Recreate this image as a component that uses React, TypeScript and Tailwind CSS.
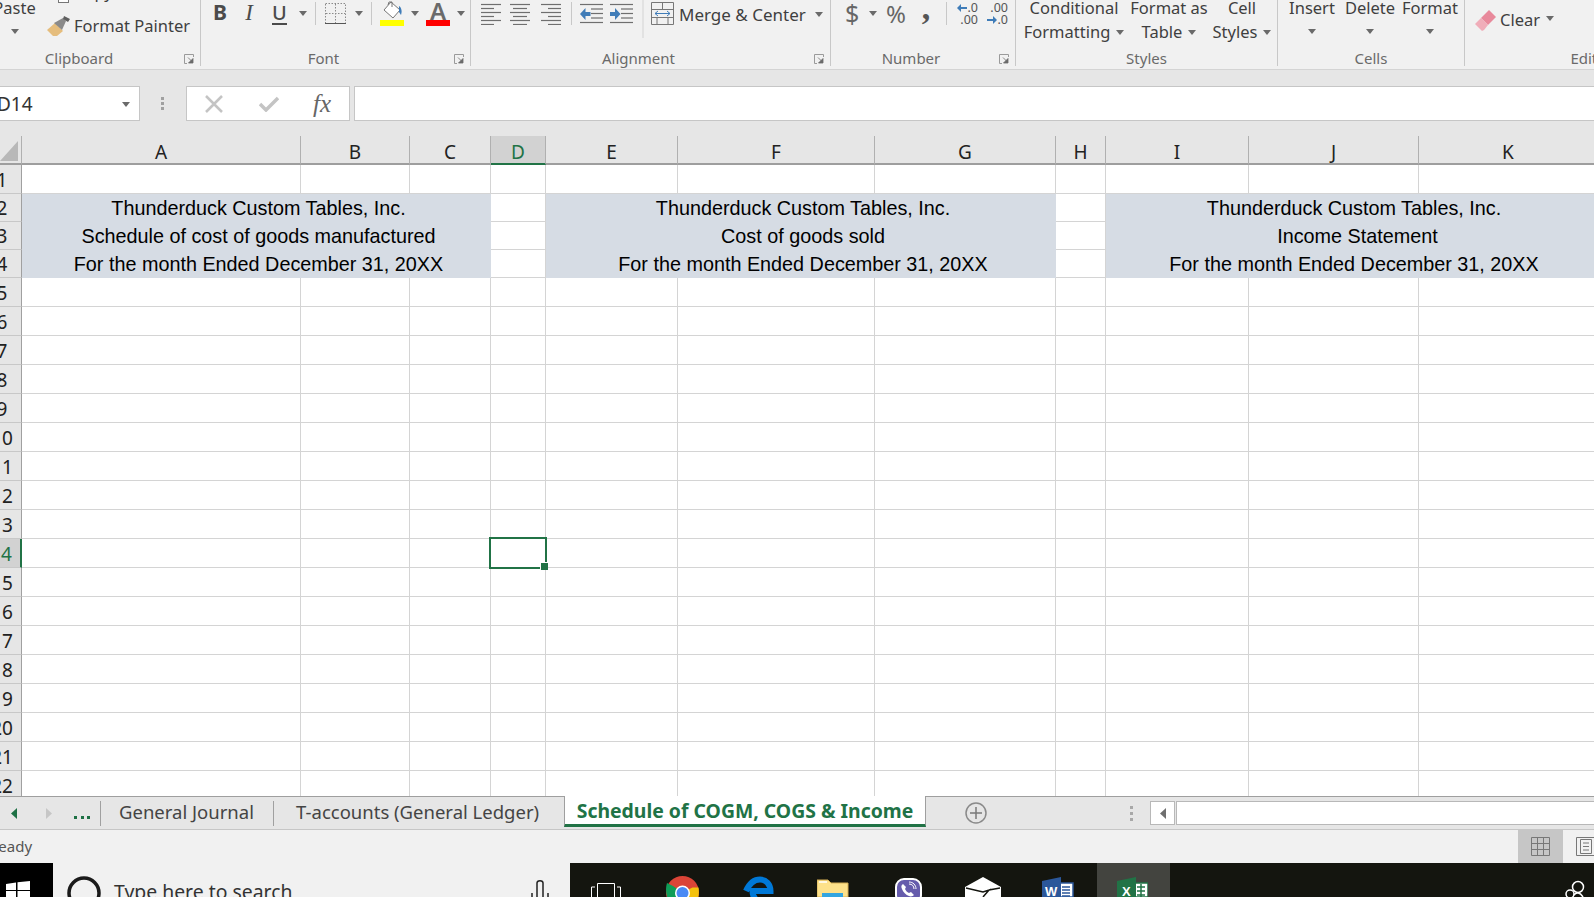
import { Fragment, type ReactNode } from "react";

const columns = ["A", "B", "C", "D", "E", "F", "G", "H", "I", "J", "K"];
const rows = Array.from({ length: 22 }, (_, i) => i + 1);

const titles: Record<number, string[]> = {
  2: [
    "Thunderduck Custom Tables, Inc.",
    "Thunderduck Custom Tables, Inc.",
    "Thunderduck Custom Tables, Inc.",
  ],
  3: [
    "Schedule of cost of goods manufactured",
    "Cost of goods sold",
    "Income Statement",
  ],
  4: [
    "For the month Ended December 31, 20XX",
    "For the month Ended December 31, 20XX",
    "For the month Ended December 31, 20XX",
  ],
};

const Caret = ({ className = "" }: { className?: string }) => (
  <svg width="8" height="5" viewBox="0 0 8 5" className={`shrink-0 ${className}`}>
    <path d="M0 0h8L4 5z" fill="#6a6a6a" />
  </svg>
);

const Launcher = () => (
  <svg width="10" height="10" viewBox="0 0 10 10" className="ml-[8px]">
    <path d="M9.5 3V.5H.5v9H3" fill="none" stroke="#9a9a9a" />
    <path d="M4 3.5l4 4M9 4.5V9H4.5z" stroke="#6a6a6a" fill="#6a6a6a" strokeWidth="0.8" />
  </svg>
);

const Sep = () => <div className="h-[23px] w-px shrink-0 bg-[#c8c8c8]" />;

const Group = ({
  label,
  launcher,
  className,
  children,
}: {
  label: string;
  launcher?: boolean;
  className: string;
  children: ReactNode;
}) => (
  <div className={`h-[66px] shrink-0 border-r border-[#c8c8c8] ${className}`}>
    <div className="flex h-[49px] flex-col">{children}</div>
    <div className="flex h-[19px] items-center">
      <span className="flex-1 text-center text-[15px] text-[#6a6a6a]">{label}</span>
      {launcher && (
        <div className="w-[24px]">
          <Launcher />
        </div>
      )}
    </div>
  </div>
);

const AlignIcon = ({ lines }: { lines: number[][] }) => (
  <svg width="20" height="22" viewBox="0 0 20 22" className="shrink-0">
    {lines.map(([a, b], i) => (
      <path key={i} d={`M${a} ${i * 4 + 1.5}H${b}`} stroke="#6f6f6f" strokeWidth="1.2" />
    ))}
  </svg>
);

const IndentIcon = ({ flip }: { flip?: boolean }) => (
  <svg width="23" height="22" viewBox="0 0 23 22" className="shrink-0">
    {[1.5, 6, 10.5, 15, 19.5].map((y, i) => (
      <path key={y} d={`M${i === 0 || i === 4 ? 0 : 11} ${y}H23`} stroke="#6f6f6f" strokeWidth="1.2" />
    ))}
    {flip ? (
      <path d="M0 9h5V5l5.500 6-5.500 6v-4H0z" fill="#3f7cb8" />
    ) : (
      <path d="M10 9H5V5l-5.500 6 5.500 6v-4h5z" fill="#3f7cb8" transform="translate(0.500 0)" />
    )}
  </svg>
);

const DecIcon = ({ up }: { up?: boolean }) => (
  <div className="flex w-[22px] shrink-0 flex-col items-end text-[12.500px] leading-[12px] text-[#555555]">
    <div className="flex items-center">
      {up ? (
        <svg width="10" height="8" viewBox="0 0 10 8">
          <path d="M10 3H4V0L0 4l4 4V5h6z" fill="#3f7cb8" />
        </svg>
      ) : null}
      <span>{up ? ".0" : ".00"}</span>
    </div>
    <div className="flex items-center">
      {up ? null : (
        <svg width="10" height="8" viewBox="0 0 10 8">
          <path d="M0 3h6V0l4 4-4 4V5H0z" fill="#3f7cb8" />
        </svg>
      )}
      <span>{up ? ".00" : ".0"}</span>
    </div>
  </div>
);

const Ribbon = () => (
  <div className="flex h-[70px] overflow-hidden border-b border-[#d4d4d4] bg-[#f1f1f1] text-[16.500px] text-[#3f3f3f]">
    <Group label="Clipboard" launcher className="-ml-[18px] w-[219px]">
      <div className="flex">
        <div className="-mt-[4px] ml-[12px] flex w-[41px] flex-col items-center">
          <span className="h-[24px] leading-[24px]">Paste</span>
          <Caret className="mt-[9px]" />
        </div>
        <div className="-mt-[28px] ml-[12px] flex flex-col">
          <div className="flex h-[40px] items-center">
            <div className="w-[27px] pl-[11px]">
              <div className="mt-[12px] h-[10px] w-[11px] border border-[#777777] bg-white" />
            </div>
            <span>Copy</span>
          </div>
          <div className="flex h-[29px] items-center">
            <svg width="23" height="21" viewBox="0 0 23 21" className="mr-[4px]">
              <path d="M0 14l8-7 8 8-6 5H6z" fill="#e5bd7d" />
              <path d="M7 7l9-5 3 3-4 9z" fill="#8a8a8a" />
              <path d="M17 0l6 3-2 3-5-3z" fill="#5f5f5f" />
            </svg>
            <span className="whitespace-nowrap">Format Painter</span>
          </div>
        </div>
      </div>
    </Group>

    <Group label="Font" launcher className="w-[270px]">
      <div className="flex h-[26px] items-center text-[#4b4b4b]">
        <span className="ml-[12px] w-[12px] text-center text-[21px] font-bold">B</span>
        <span className="ml-[18px] w-[12px] text-center font-['Liberation_Serif',serif] text-[23px] italic">I</span>
        <span className="ml-[17px] w-[15px] border-b-2 border-[#4b4b4b] text-center text-[20px] leading-[21px] font-medium">U</span>
        <Caret className="ml-[12px]" />
        <div className="ml-[8px]">
          <Sep />
        </div>
        <svg width="21" height="21" viewBox="0 0 21 21" className="ml-[9px] shrink-0">
          <path d="M.5.500h20v20H.5z" fill="none" stroke="#8a8a8a" strokeDasharray="1.500 1.500" />
          <path d="M10.500 1v19M1 10.500h19" stroke="#8a8a8a" strokeDasharray="1.500 1.500" />
          <path d="M0 20.500h21" stroke="#555555" />
        </svg>
        <Caret className="ml-[9px]" />
        <div className="ml-[8px]">
          <Sep />
        </div>
        <div className="ml-[8px] flex w-[24px] shrink-0 flex-col">
          <svg width="24" height="19" viewBox="0 0 24 19">
            <path d="M11 1l9 8-7 8-9-8z" fill="#ffffff" stroke="#777777" />
            <path d="M8 4l1-3h3v5" fill="none" stroke="#777777" />
            <path d="M19 5c3 2 3 6 2 9l-2-3c0-2 0-4 0-6z" fill="#3f7cb8" />
          </svg>
          <div className="h-[6px] bg-[#ffff00]" />
        </div>
        <Caret className="ml-[7px]" />
        <div className="ml-[7px] flex w-[24px] shrink-0 flex-col items-center">
          <span className="h-[19px] text-[24px] leading-[19px] font-semibold text-[#6a6a6a]">A</span>
          <div className="h-[6px] w-full bg-[#ff0000]" />
        </div>
        <Caret className="ml-[7px]" />
      </div>
    </Group>

    <Group label="Alignment" launcher className="w-[360px]">
      <div className="flex h-[27px] items-center">
        <div className="ml-[10px]">
          <AlignIcon lines={[[0, 20], [0, 13], [0, 20], [0, 13], [0, 20], [0, 13]]} />
        </div>
        <div className="ml-[9px]">
          <AlignIcon lines={[[0, 20], [3, 17], [0, 20], [3, 17], [0, 20], [3, 17]]} />
        </div>
        <div className="ml-[11px]">
          <AlignIcon lines={[[0, 20], [7, 20], [0, 20], [7, 20], [0, 20], [7, 20]]} />
        </div>
        <div className="ml-[10px]">
          <Sep />
        </div>
        <div className="ml-[8px]">
          <IndentIcon />
        </div>
        <div className="ml-[7px]">
          <IndentIcon flip />
        </div>
        <div className="ml-[9px] h-[38px] w-[2px] shrink-0 self-start bg-[#e2e2e2]" />
        <svg width="23" height="23" viewBox="0 0 23 23" className="ml-[7px] shrink-0">
          <path d="M.5.500h22v22H.5zM.5 7.500h22M.5 15.500h22M11.500 1v6M6 16v6M17 16v6" fill="none" stroke="#777777" />
          <rect x="1" y="8" width="21" height="7" fill="#f1f1f1" />
          <path d="M4 11.500h15M4 11.500l3-2.500M4 11.500l3 2.500M19 11.500l-3-2.500M19 11.500l-3 2.500" stroke="#3f7cb8" fill="none" />
        </svg>
        <span className="mt-[2px] ml-[5px] w-[125px] text-[17px] whitespace-nowrap">Merge &amp; Center</span>
        <Caret className="mt-[2px] ml-[11px]" />
      </div>
    </Group>

    <Group label="Number" launcher className="w-[185px]">
      <div className="flex h-[27px] items-center text-[#666666]">
        <span className="ml-[14px] w-[12px] text-center text-[25px] leading-[27px]">$</span>
        <Caret className="ml-[12px]" />
        <span className="ml-[9px] w-[20px] text-center text-[24px] leading-[27px]">%</span>
        <span className="-mt-[12px] ml-[15px] w-[10px] text-center font-['Liberation_Serif',serif] text-[34px] leading-[20px] font-bold text-[#555555]">,</span>
        <div className="ml-[15px]">
          <Sep />
        </div>
        <div className="ml-[9px]">
          <DecIcon up />
        </div>
        <div className="ml-[8px]">
          <DecIcon />
        </div>
      </div>
    </Group>

    <Group label="Styles" className="w-[262px]">
      <div className="-mt-[4px] flex leading-[24px]">
        <div className="ml-[6px] w-[104px] text-center">
          <div>Conditional</div>
          <div className="flex items-center justify-center">
            Formatting
            <Caret className="ml-[6px]" />
          </div>
        </div>
        <div className="ml-[2px] w-[82px] text-center">
          <div className="whitespace-nowrap">Format as</div>
          <div className="flex items-center justify-center">
            Table
            <Caret className="ml-[6px]" />
          </div>
        </div>
        <div className="ml-[2px] w-[60px] text-center">
          <div>Cell</div>
          <div className="flex items-center justify-center">
            Styles
            <Caret className="ml-[6px]" />
          </div>
        </div>
      </div>
    </Group>

    <Group label="Cells" className="w-[187px]">
      <div className="-mt-[4px] flex leading-[24px]">
        <div className="ml-[8px] flex w-[52px] flex-col items-center">
          Insert
          <Caret className="mt-[9px]" />
        </div>
        <div className="ml-[4px] flex w-[56px] flex-col items-center">
          Delete
          <Caret className="mt-[9px]" />
        </div>
        <div className="ml-[2px] flex w-[60px] flex-col items-center">
          Format
          <Caret className="mt-[9px]" />
        </div>
      </div>
    </Group>

    <Group label="Editing" className="w-[260px] border-r-0">
      <div className="flex h-[40px] items-center">
        <svg width="21" height="21" viewBox="0 0 21 21" className="ml-[10px] shrink-0">
          <path d="M14 0l7 7-8 8-7-7z" fill="#e8899b" />
          <path d="M6 8l7 7-4 5-2 1-7-7z" fill="#f0adb9" />
        </svg>
        <span className="ml-[4px]">Clear</span>
        <Caret className="-mt-[4px] ml-[6px]" />
      </div>
    </Group>
  </div>
);

const FormulaBar = () => (
  <div className="flex h-[66px] bg-[#e6e6e6] pt-[16px]">
    <div className="-ml-[10px] flex h-[35px] w-[150px] items-center border border-[#c6c6c6] bg-white pt-[2px] pl-[6px] text-[19px] text-[#333333]">
      <span className="flex-1">D14</span>
      <Caret className="mr-[9px]" />
    </div>
    <div className="ml-[20px] flex h-[35px] w-[4px] flex-col items-center justify-center gap-[2px]">
      <div className="size-[3px] bg-[#a0a0a0]" />
      <div className="size-[3px] bg-[#a0a0a0]" />
      <div className="size-[3px] bg-[#a0a0a0]" />
    </div>
    <div className="ml-[22px] flex h-[35px] w-[164px] items-center border border-[#c6c6c6] bg-white">
      <svg width="18" height="18" viewBox="0 0 18 18" className="ml-[18px]">
        <path d="M1 1l16 16M17 1L1 17" stroke="#c4c4c4" strokeWidth="2.500" />
      </svg>
      <svg width="20" height="16" viewBox="0 0 20 16" className="ml-[36px]">
        <path d="M1 8l6 6L19 2" fill="none" stroke="#c4c4c4" strokeWidth="3.500" />
      </svg>
      <span className="ml-[34px] font-['Liberation_Serif',serif] text-[25px] leading-none text-[#666666] italic">fx</span>
    </div>
    <div className="-mr-[5px] ml-[4px] h-[35px] flex-1 border border-[#c6c6c6] bg-white" />
  </div>
);

const RowHead = ({ row }: { row: number }) => {
  const active = row === 14;
  return (
    <div
      className={`flex items-center justify-end overflow-hidden border-b border-[#c8c8c8] pt-[2px] pr-[4px] text-[19px] ${
        active
          ? "border-r-2 border-r-[#217346] bg-[#d2d2d2] text-[#217346]"
          : "border-r border-r-[#a0a0a0] bg-[#e6e6e6] text-[#222222]"
      }`}
    >
      <span className="w-[30px] shrink-0 text-center">{row}</span>
    </div>
  );
};

const BlankCell = () => <div className="border-r border-b border-[#d4d4d4] bg-white" />;

const TitleCell = ({ text }: { text: string }) => (
  <div
    className={`col-span-3 flex items-center justify-center bg-[#d6dce4] pt-[1px] font-['Liberation_Sans',Arial,sans-serif] text-[19.800px] whitespace-nowrap text-black ${
      text === "Income Statement" ? "pl-[11px]" : "pl-[4px]"
    }`}
  >
    {text}
  </div>
);

const Sheet = () => (
  <div className="relative h-[660px] overflow-hidden bg-white">
    <div className="grid w-[1598px] grid-cols-[22px_279px_109px_81px_55px_132px_197px_181px_50px_143px_170px_179px] grid-rows-[29px_29px_28px_28px_28px_repeat(18,29px)]">
      <div className="flex items-end justify-end border-r border-b-2 border-r-[#b0b0b0] border-b-[#9e9e9e] bg-[#e6e6e6] pr-[3px] pb-[2px]">
        <svg width="18" height="20" viewBox="0 0 18 20">
          <path d="M18 0v20H0z" fill="#b8b8b8" />
        </svg>
      </div>
      {columns.map((col) => (
        <div
          key={col}
          className={`flex items-center justify-center border-r border-b-2 border-r-[#b0b0b0] pt-[5px] text-[19px] ${
            col === "D"
              ? "border-b-[#217346] bg-[#d2d2d2] text-[#217346]"
              : "border-b-[#9e9e9e] bg-[#e6e6e6] text-[#222222]"
          }`}
        >
          {col}
        </div>
      ))}
      {rows.map((row) => (
        <Fragment key={row}>
          <RowHead row={row} />
          {titles[row] ? (
            <>
              <TitleCell text={titles[row][0]} />
              <BlankCell />
              <TitleCell text={titles[row][1]} />
              <BlankCell />
              <TitleCell text={titles[row][2]} />
            </>
          ) : (
            columns.map((col) => <BlankCell key={col} />)
          )}
        </Fragment>
      ))}
    </div>
    {/* active cell D14 */}
    <div className="absolute top-[401px] left-[489px] h-[32px] w-[58px] border-2 border-[#217346]">
      <div className="absolute -right-[3px] -bottom-[3px] h-[8px] w-[8px] border-t border-l border-white bg-[#217346]" />
    </div>
  </div>
);

const TabBar = () => (
  <div className="flex h-[34px] items-center border-t border-b border-t-[#9f9f9f] border-b-[#c6c6c6] bg-[#e6e6e6] text-[18.500px] text-[#444444]">
    <svg width="6" height="11" viewBox="0 0 6 11" className="ml-[11px] shrink-0">
      <path d="M6 0v11L0 5.500z" fill="#1e7145" />
    </svg>
    <svg width="6" height="11" viewBox="0 0 6 11" className="ml-[29px] shrink-0">
      <path d="M0 0v11l6-5.500z" fill="#c6c6c6" />
    </svg>
    <div className="mt-[9px] ml-[22px] flex w-[16px] shrink-0 justify-between">
      <div className="size-[3px] bg-[#1e7145]" />
      <div className="size-[3px] bg-[#1e7145]" />
      <div className="size-[3px] bg-[#1e7145]" />
    </div>
    <div className="ml-[10px] h-[25px] w-px shrink-0 bg-[#a0a0a0]" />
    <span className="ml-[18px] w-[133px] shrink-0 pb-[3px] text-center whitespace-nowrap">General Journal</span>
    <div className="ml-[21px] h-[25px] w-px shrink-0 bg-[#a0a0a0]" />
    <span className="ml-[22px] w-[243px] shrink-0 pb-[3px] text-center whitespace-nowrap">T-accounts (General Ledger)</span>
    <div className="-mt-px ml-[25px] flex h-[31px] w-[362px] shrink-0 items-center justify-center self-start border-x border-b-[3px] border-x-[#9f9f9f] border-b-[#217346] bg-white pt-[1px] text-[19.400px] font-bold whitespace-nowrap text-[#217346]">
      Schedule of COGM, COGS &amp; Income
    </div>
    <svg width="22" height="22" viewBox="0 0 22 22" className="ml-[39px] shrink-0">
      <circle cx="11" cy="11" r="10" fill="none" stroke="#8a8a8a" strokeWidth="1.500" />
      <path d="M11 5v12M5 11h12" stroke="#7a7a7a" strokeWidth="1.500" />
    </svg>
    <div className="ml-[143px] flex w-[3px] shrink-0 flex-col gap-[3px]">
      <div className="size-[3px] bg-[#a8a8a8]" />
      <div className="size-[3px] bg-[#a8a8a8]" />
      <div className="size-[3px] bg-[#a8a8a8]" />
    </div>
    <div className="ml-[17px] flex h-[24px] w-[25px] shrink-0 items-center justify-center border border-[#b8b8b8] bg-white">
      <svg width="6" height="11" viewBox="0 0 6 11">
        <path d="M6 0v11L0 5.500z" fill="#6f6f6f" />
      </svg>
    </div>
    <div className="-mr-[5px] ml-px h-[24px] flex-1 border border-[#b8b8b8] bg-white" />
  </div>
);

const StatusBar = () => (
  <div className="flex h-[33px] items-center bg-[#f1f1f1] text-[15px] text-[#555555]">
    <span className="-ml-[11px] flex-1">Ready</span>
    <div className="flex h-full w-[45px] items-center justify-center bg-[#c6c6c6]">
      <svg width="19" height="19" viewBox="0 0 19 19">
        <path d="M.5.500h18v18H.5zM6.500 1v18M12.500 1v18M1 6.500h18M1 12.500h18" fill="none" stroke="#777777" />
      </svg>
    </div>
    <svg width="20" height="19" viewBox="0 0 20 19" className="mr-[-2px] ml-[13px] shrink-0">
      <path d="M.5.500h19v18H.5z" fill="none" stroke="#777777" />
      <path d="M4.500 2.500h11v14h-11zM7 6h6M7 9.500h6M7 13h6" fill="none" stroke="#777777" />
    </svg>
  </div>
);

const Taskbar = () => (
  <div className="flex h-[34px] overflow-hidden bg-[#14150f]">
    <div className="w-[53px] shrink-0 bg-black">
      <svg width="53" height="34" viewBox="0 0 53 34">
        <path d="M6 21l10-1.500V27H6zM17.500 19.200L30 18v9H17.500zM6 28h10v8H6zM17.500 28H30v8H17.500z" fill="#ffffff" />
      </svg>
    </div>
    <div className="flex w-[517px] shrink-0 bg-[#f1f1f1]">
      <svg width="50" height="34" viewBox="0 0 50 34" className="ml-[12px] shrink-0">
        <circle cx="19" cy="30" r="15" fill="none" stroke="#1a1a1a" strokeWidth="3.500" />
      </svg>
      <span className="mt-[17px] -ml-[1px] w-[179px] shrink-0 text-[19.400px] leading-[24px] whitespace-nowrap text-[#333333]">Type here to search</span>
      <svg width="18" height="34" viewBox="0 0 18 34" className="ml-[238px] shrink-0">
        <path d="M6 34V20c0-3 6-3 6 0v14M1 30v4M17 30v4" fill="none" stroke="#222222" strokeWidth="1.500" />
      </svg>
    </div>
    <svg width="30" height="34" viewBox="0 0 30 34" className="ml-[21px] shrink-0">
      <path d="M.5 34V24H4M29.500 34V24H26" fill="none" stroke="#ffffff" />
      <path d="M6.500 34V20.500h17V34" fill="none" stroke="#ffffff" />
    </svg>
    {/* chrome */}
    <svg width="33" height="34" viewBox="0 0 33 34" className="ml-[45px] shrink-0">
      <circle cx="16.500" cy="29.500" r="16.500" fill="#db4437" />
      <path d="M16.500 29.500l10-5h6c1 6 0 12-3 16z" fill="#f4c20d" />
      <path d="M16.500 29.500L7 23 1 20c-2 6-1 14 3 20z" fill="#0f9d58" />
      <circle cx="16.500" cy="30" r="7.500" fill="#ffffff" />
      <circle cx="16.500" cy="30" r="6" fill="#4a8af4" />
    </svg>
    {/* edge */}
    <svg width="31" height="34" viewBox="0 0 31 34" className="ml-[44px] shrink-0">
      <path d="M3 28C7 19 12 16.500 17 16.500c6 0 10.500 5 10.500 11.500H9.500c0 3 1 6 3 8" fill="none" stroke="#0078d7" strokeWidth="6" />
    </svg>
    {/* file explorer */}
    <svg width="32" height="34" viewBox="0 0 32 34" className="ml-[43px] shrink-0">
      <path d="M0 17h11l3 3h17v14H0z" fill="#fde18a" stroke="#d4ae55" />
      <path d="M2 19h8" stroke="#ffffff" strokeWidth="1.500" />
      <rect x="5" y="30" width="21" height="4" fill="#33a5e0" />
    </svg>
    {/* viber */}
    <svg width="27" height="34" viewBox="0 0 27 34" className="ml-[46px] shrink-0">
      <rect x="1" y="16" width="25" height="24" rx="8" fill="#665cac" stroke="#ffffff" strokeWidth="2" />
      <path d="M8 21c-2 1-2 3-1 5 1 3 4 6 7 7 2 1 4 0 5-1l-3-3-2 1c-2-1-3-2-4-4l1-2z" fill="#ffffff" />
      <path d="M14 21c3 0 5 2 5 5M14 19c4 0 7 3 7 7" fill="none" stroke="#ffffff" />
    </svg>
    {/* mail */}
    <svg width="36" height="34" viewBox="0 0 36 34" className="ml-[43px] shrink-0">
      <path d="M18 14l18 10v10H0V24z" fill="#ffffff" />
      <path d="M1 25l17 4 6-2-6 7M35 25l-11 2" fill="none" stroke="#14150f" strokeWidth="1.500" />
    </svg>
    {/* word */}
    <svg width="32" height="34" viewBox="0 0 32 34" className="ml-[41px] shrink-0">
      <path d="M17 20h14v14H17z" fill="#ffffff" stroke="#2b579a" strokeWidth="1.500" />
      <path d="M20 24h8M20 27h8M20 30h8M20 33h8" stroke="#2b579a" strokeWidth="1.500" />
      <path d="M0 18l19-4v20H0z" fill="#2b579a" />
      <text x="3" y="33" fontSize="13" fontWeight="700" fill="#ffffff" fontFamily="Liberation Sans, sans-serif">W</text>
    </svg>
    <div className="ml-[23px] h-full w-[73px] shrink-0 bg-[#43443f] pl-[20px]">
      {/* excel */}
      <svg width="31" height="34" viewBox="0 0 31 34">
        <path d="M17 20h14v14H17z" fill="#ffffff" stroke="#217346" strokeWidth="1.500" />
        <path d="M20 24h8M20 28h8M20 32h8M24 21v13" stroke="#217346" strokeWidth="1.500" />
        <path d="M0 18l19-4v20H0z" fill="#217346" />
        <text x="5" y="33" fontSize="13" fontWeight="700" fill="#ffffff" fontFamily="Liberation Sans, sans-serif">X</text>
      </svg>
    </div>
    <svg width="20" height="34" viewBox="0 0 20 34" className="mr-[9px] ml-auto shrink-0">
      <circle cx="13" cy="24" r="5.500" fill="none" stroke="#ffffff" strokeWidth="1.500" />
      <circle cx="5" cy="31" r="4" fill="none" stroke="#ffffff" strokeWidth="1.500" />
      <path d="M9 32c2-3 6-3 9 2" fill="none" stroke="#ffffff" strokeWidth="1.500" />
    </svg>
  </div>
);

const App = () => {
  return (
    <div className="flex h-[897px] w-[1594px] flex-col overflow-hidden font-['Noto_Sans',sans-serif]">
      <Ribbon />
      <FormulaBar />
      <Sheet />
      <TabBar />
      <StatusBar />
      <Taskbar />
    </div>
  );
};

export default App;
